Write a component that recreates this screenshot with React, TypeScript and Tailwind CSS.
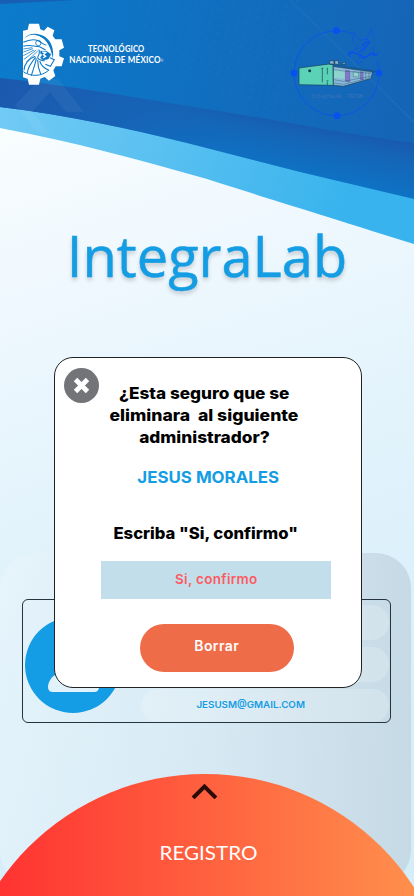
import React from "react";

function Backdrop() {
  return (
    <svg className="absolute inset-0 h-full w-full" viewBox="0 0 414 896" aria-hidden="true">
      <defs>
        <linearGradient id="page" gradientUnits="userSpaceOnUse" x1="60" y1="120" x2="300" y2="860">
          <stop offset="0" stopColor="#f8fdfe" />
          <stop offset="0.2" stopColor="#eff8fe" />
          <stop offset="0.55" stopColor="#e0f2fb" />
          <stop offset="0.75" stopColor="#daf0fb" />
          <stop offset="1" stopColor="#d5ecf9" />
        </linearGradient>
        <linearGradient id="sky" gradientUnits="userSpaceOnUse" x1="0" y1="20" x2="400" y2="90">
          <stop offset="0" stopColor="#0c7bcb" />
          <stop offset="0.5" stopColor="#106fc0" />
          <stop offset="1" stopColor="#1565b7" />
        </linearGradient>
        <linearGradient id="deep" gradientUnits="userSpaceOnUse" x1="120" y1="82" x2="85" y2="250">
          <stop offset="0" stopColor="#1859ae" />
          <stop offset="0.1" stopColor="#1565b7" />
          <stop offset="0.25" stopColor="#106ec0" />
          <stop offset="0.4" stopColor="#0b79cb" />
          <stop offset="1" stopColor="#087fd1" />
        </linearGradient>
        <linearGradient id="deepLeft" gradientUnits="userSpaceOnUse" x1="0" y1="90" x2="230" y2="130">
          <stop offset="0" stopColor="#1b59ae" />
          <stop offset="0.5" stopColor="#1860b4" stopOpacity="0.8" />
          <stop offset="1" stopColor="#1565b7" stopOpacity="0" />
        </linearGradient>
        <linearGradient id="cyan" x1="0" y1="0" x2="1" y2="0.3">
          <stop offset="0" stopColor="#78cdf5" />
          <stop offset="0.5" stopColor="#5bc1f1" />
          <stop offset="1" stopColor="#38b3ed" />
        </linearGradient>
        <pattern id="dots" width="9" height="8" patternUnits="userSpaceOnUse" patternTransform="rotate(12)">
          <circle cx="3" cy="3" r="1" fill="#3b93dc" opacity="0.12" />
        </pattern>
      </defs>
      <rect width="414" height="896" fill="url(#page)" />
      <path d="M0 0H414V244C300 208 260 196 207 179C140 160 75 142 0 128Z" fill="url(#cyan)" />
      <path d="M0 0H414V199L300 172L187 143C130 129 67 115 0 107Z" fill="url(#deep)" />
      <path d="M0 0H414V199L300 172L187 143C130 129 67 115 0 107Z" fill="url(#deepLeft)" />
      <path d="M0 0H414V143C350 135 300 124 207 109C130 97 60 84 0 78Z" fill="url(#sky)" />
      <path d="M0 0H76L0 4Z" fill="#165fb5" />
      <path d="M130 0H300V125L160 70Z" fill="url(#dots)" />
      <path d="M290 0L414 122" stroke="#2976c0" strokeWidth="1.5" opacity="0.45" />
      <path d="M15 105L40 79H58L84 112H66L50 92L32 112L50 134H39Z" fill="#fff" opacity="0.05" />
    </svg>
  );
}

function GearCrest() {
  return (
    <svg className="h-[62px] w-[42px]" viewBox="69 70 126 186" aria-hidden="true">
      <path
        d="M69 93L83 90L87 72H117L121 89L132 93L143 81L163 92L158 108L166 119H185L192 144L178 152V170L192 176L185 200H167L160 212L166 229L147 243L134 232L121 237L117 255H87L83 237L69 233Z"
        fill="#fff"
      />
      <g fill="none" stroke="#0b78c8" strokeWidth="3.2">
        <path d="M73 117C84 98 117 98 137 113C153 125 162 145 159 177C151 137 137 112 106 106C91 103 80 110 73 117Z" fill="#0b78c8" stroke="none" />
        <path d="M70 128C88 119 104 118 116 124S132 137 139 136" />
        <circle cx="115" cy="130" r="8" strokeWidth="2.5" />
        <path d="M70 140C87 133 99 140 119 141L137 151" />
        <path d="M70 148L97 144M70 157L99 147M70 168L102 151M72 179L109 151M79 187L113 154" strokeWidth="2.3" />
        <path d="M116 150C122 158 116 165 113 173C113 182 124 181 134 184" />
        <path d="M122 154L140 155L153 164L145 178L129 182L121 174L127 165L121 161Z" fill="#0b78c8" strokeWidth="1" />
        <path d="M127 157L137 159L130 165L137 170L129 175" stroke="#fff" strokeWidth="4" />
        <path d="M106 170C86 177 72 194 72 212M107 173C94 188 83 203 82 220M109 176C106 194 99 210 94 228M113 180C113 197 116 210 122 223M119 184C124 199 134 207 146 211" />
        <path d="M70 216C91 231 124 232 147 211" strokeWidth="3" />
        <path d="M150 174L163 180L151 200L136 194" />
      </g>
    </svg>
  );
}

function IntegraBadge() {
  return (
    <svg className="h-[105px] w-[110px]" viewBox="0 0 330 315" aria-hidden="true">
      <g fill="none" stroke="#0b50ef" strokeWidth="2.4">
        <path d="M216 41A127.500 127.500 0 1 0 292 124" />
        <path d="M218 65L220 35L239 60L263 58M258 60L274 27L283 52M231 72L225 88L244 82L258 65L268 67L253 91L235 111L254 117L271 99L288 108L298 95M224 95L209 94L203 106L214 111M278 80L283 101L270 96M225 119L234 131L249 123" strokeWidth="2" />
        <path d="M246 78C254 64 268 65 268 65C262 78 247 89 237 96M206 103C216 91 232 100 246 109C258 116 265 108 271 103C280 98 286 111 291 102" strokeWidth="4" />
      </g>
      <g fill="#0652ef">
        <circle cx="169" cy="32" r="10" />
        <circle cx="42" cy="159.500" r="10" />
        <circle cx="297" cy="159" r="10" />
        <circle cx="171" cy="287" r="10" />
      </g>
      <g stroke="#173f58" strokeWidth="2">
        <path d="M57 144L148 132L159 134L160 196L57 194Z" fill="#5bd2b6" />
        <path d="M160 139L278 155L272 176L190 199L160 196Z" fill="#89b8d8" />
        <path d="M162 149L194 152V177L162 173Z" fill="#8ed3cd" stroke="none" />
        <path d="M197 151L209 153V186L197 184Z" fill="#8379c7" stroke="#5f62ad" />
        <path d="M241 155L249 157V180L241 178Z" fill="#8379c7" stroke="#5f62ad" />
        <path d="M220 155L236 158V171L220 170Z" fill="#93d5cd" strokeWidth="1" />
        <path d="M149 133V122H157L160 119L163 132ZM164 123L175 121L176 134L164 132ZM183 133L193 126L198 133Z" fill="#84b1d1" />
        <path d="M151 132L287 154L280 158L160 139M161 179L190 184L272 169M161 189L190 193L268 175M160 149L190 153L273 160M257 157V176M267 158V174" fill="none" strokeWidth="1" />
        <path d="M127 145V187M124 145H130M142 143V163M142 185V195M140 182H145" fill="none" />
      </g>
      <circle cx="89" cy="152" r="4.500" fill="#173f58" />
      <text x="94" y="234" fontFamily="Liberation Mono, monospace" fontSize="15" textLength="154" fill="#3f74b8">IntegraLAB -TECNM</text>
    </svg>
  );
}

export default function App() {
  return (
    <main className="relative flex h-[896px] w-[414px] flex-col overflow-hidden font-[Inter,'Open_Sans',sans-serif]">
      <Backdrop />

      <header className="relative flex h-[220px] shrink-0 items-start pl-[23px]">
        <div className="mt-[23px]"><GearCrest /></div>
        <div className="mt-[43px] ml-1 flex w-[95px] flex-col items-center font-[Lato,sans-serif] text-[9.500px] leading-[11px] font-bold whitespace-nowrap text-white">
          <span className="w-fit scale-x-[0.800] tracking-[0.2px]">TECNOLÓGICO</span>
          <span className="flex w-fit scale-x-[0.850] items-end tracking-[0.2px]">NACIONAL DE MÉXICO<span className="text-[4px] leading-[8px] font-normal">®</span></span>
        </div>
        <div className="mt-5 ml-[116px]"><IntegraBadge /></div>
      </header>

      <h1 className="relative -mt-[5px] mb-[5px] flex h-[80px] shrink-0 items-center justify-center font-['Open_Sans',sans-serif] text-[56px] leading-[80px] font-medium text-[#159de4] [-webkit-text-stroke:0.5px_#159de4] [text-shadow:0_3px_4px_#0003]">
        IntegraLab
      </h1>

      <section className="relative mt-[253px] mr-[3px] h-[332px] shrink-0 rounded-[35px] bg-linear-to-r from-[#eef6fb]/40 via-[#d6e6ef]/60 to-[#c5d9e4]/95 pt-[46px] pl-[22px]">
        <article className="flex h-[124px] w-[369px] rounded-[6px] border border-[#26343e] pl-[2px]">
          <svg className="mt-[17px] h-24 w-24 shrink-0" viewBox="0 0 96 96" aria-hidden="true">
            <circle cx="48" cy="48" r="48" fill="#149de5" />
            <circle cx="48" cy="32" r="15" fill="#e2f2fa" />
            <path d="M23 70C23 61 34 52 48 52S74 61 74 70Q74 75 69 75H28Q23 75 23 70Z" fill="#e2f2fa" />
          </svg>
          <div className="mt-[5px] ml-[20px] flex w-[248px] flex-col gap-[7px]">
            <div className="h-[35px] rounded-[17px] bg-white/20" />
            <div className="h-[35px] rounded-[17px] bg-white/20" />
            <div className="flex h-[33px] items-center justify-center rounded-[17px] bg-white/20 pr-[28px] text-[9.500px] font-semibold text-[#159de4]">
              <span className="scale-x-[1.030]">JESUSM@GMAIL.COM</span>
            </div>
          </div>
        </article>
      </section>

      <section role="dialog" aria-modal="true" className="absolute top-[357px] left-[54px] flex h-[331px] w-[307.500px] flex-col items-center rounded-[19px] border border-[#222] bg-white">
        <button aria-label="Cerrar" className="absolute top-[10px] left-[8.500px] grid h-[35px] w-[35px] place-items-center rounded-full bg-[#727477]">
          <svg viewBox="0 0 17 17" className="h-[17px] w-[17px]"><path d="M2.500 2.500L14.500 14.500M14.500 2.500L2.500 14.500" stroke="white" strokeWidth="4.800" /></svg>
        </button>
        <h2 className="mt-[24px] flex flex-col items-center pr-[7px] text-[16px] leading-[22px] font-extrabold whitespace-pre text-black">
          <span className="scale-x-[1.075]">¿Esta seguro que se</span>
          <span className="scale-x-[1.100]">{"eliminara  al siguiente"}</span>
          <span className="scale-x-[1.080]">administrador?</span>
        </h2>
        <p className="mt-[18px] text-[16px] leading-[22px] font-bold text-[#159de4]"><span className="inline-block scale-x-[1.055]">JESUS MORALES</span></p>
        <label htmlFor="confirmacion" className="mt-[34px] pr-[5px] text-[16px] leading-[22px] font-extrabold text-black">
          <span className="inline-block scale-x-[1.040]">Escriba "Si, confirmo"</span>
        </label>
        <input id="confirmacion" defaultValue="Si, confirmo" className="mt-[17px] ml-[17px] h-[38px] w-[230px] bg-[#c3deeb] pb-[2px] text-center text-[13.500px] font-semibold tracking-[0.320px] text-[#fb5b61] outline-none" />
        <button className="mt-[24.500px] ml-[18px] flex h-[48.500px] w-[154px] shrink-0 items-center justify-center rounded-[24px] bg-[#ef6c49] pb-[4px] text-[14px] font-semibold tracking-[0.400px] text-white">Borrar</button>
      </section>

      <footer className="absolute top-[774px] left-[-43.600px] flex h-[497px] w-[497.200px] flex-col items-center rounded-full bg-[linear-gradient(90deg,#ff3131_7%,#ff914d_94%)]">
        <svg className="mt-[7px] mr-[1px] h-[18px] w-[27px]" viewBox="0 0 27 18"><path d="M3.500 15.500L13.500 5.500L23.500 15.500" fill="none" stroke="#290b08" strokeWidth="4" strokeLinecap="square" /></svg>
        <button className="mt-[39px] ml-[8px] font-[Lato,sans-serif] text-[20px] leading-[28px] font-normal text-white"><span className="inline-block scale-x-[1.030]">REGISTRO</span></button>
      </footer>
    </main>
  );
}
